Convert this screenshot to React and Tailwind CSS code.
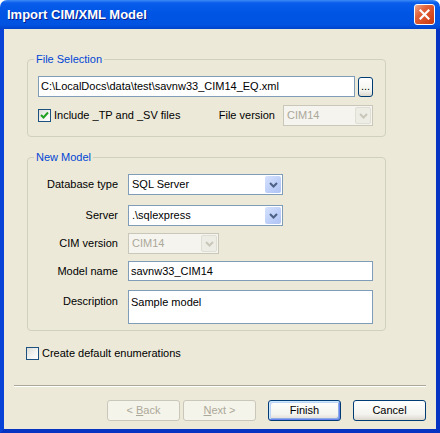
import React from 'react';

function ComboArrow({ disabled }) {
  return (
    <div
      className={
        disabled
          ? 'absolute right-[1px] top-[1px] bottom-[1px] w-[16px] flex items-center justify-center bg-[#EEEDE5] border border-[#E0DED3] rounded-[2px]'
          : 'absolute right-[1px] top-[1px] bottom-[1px] w-[16px] flex items-center justify-center bg-[linear-gradient(135deg,#D6E2FD_0%,#BCCEF8_60%,#AFC3F3_100%)] rounded-[2px]'
      }
    >
      <svg width="9" height="6" viewBox="0 0 9 6">
        <path d="M1 1 L4.5 4.5 L8 1" fill="none" stroke={disabled ? '#C9C7BA' : '#4D6185'} strokeWidth="2" />
      </svg>
    </div>
  );
}

function Combo({ value, width, disabled }) {
  return (
    <div
      className={
        disabled
          ? 'relative h-[21px] border border-[#C9C7BA] bg-[#F5F4EF] text-[#ACA899] pl-[3px] flex items-center'
          : 'relative h-[21px] border border-[#7F9DB9] bg-white pl-[3px] flex items-center'
      }
      style={{ width }}
    >
      {value}
      <ComboArrow disabled={disabled} />
    </div>
  );
}

function CheckBox({ checked }) {
  return (
    <div className="w-[13px] h-[13px] border border-[#1C5180] bg-[linear-gradient(135deg,#DCDCD7_0%,#F5F5F2_60%,#FFFFFF_100%)] flex items-center justify-center">
      {checked && (
        <svg width="9" height="9" viewBox="0 0 9 9">
          <path d="M1 4 L3.5 6.5 L8 1.5" fill="none" stroke="#21A121" strokeWidth="2" />
        </svg>
      )}
    </div>
  );
}

function Button({ children, disabled, isDefault }) {
  let cls = 'w-[73px] h-[21px] rounded-[3px] flex items-center justify-center border ';
  if (disabled) {
    cls += 'border-[#C9C7BA] bg-[#F5F4EA] text-[#ACA899]';
  } else if (isDefault) {
    cls += 'border-[#003C74] bg-[linear-gradient(#FFFFFF_0%,#F3F3EF_70%,#DCD8CD_100%)] shadow-[inset_1px_1px_0_#CEE7FF,inset_-1px_-1px_0_#6982EE,inset_2px_2px_0_#BCD4F6,inset_-2px_-2px_0_#89ADE4]';
  } else {
    cls += 'border-[#003C74] bg-[linear-gradient(#FFFFFF_0%,#F3F3EF_70%,#DCD8CD_100%)]';
  }
  return <div className={cls}>{children}</div>;
}

export default function App() {
  return (
    <div className="w-[440px] h-[433px] flex flex-col font-['Liberation_Sans',Arial,sans-serif] text-[11px] text-black">
      {/* title bar */}
      <div className="h-[29px] flex items-center pl-[7px] pr-[5px] rounded-t-[7px] bg-[linear-gradient(#3D8BF7_0%,#0A5DEB_10%,#0055E5_45%,#0053E1_85%,#0043CC_100%)]">
        <span className="flex-1 text-white font-bold text-[13px] pt-[1px] [text-shadow:1px_1px_0_#0A1E8C]">Import CIM/XML Model</span>
        <div className="w-[21px] h-[21px] rounded-[3px] border border-white bg-[linear-gradient(135deg,#F2A88E_0%,#E3623A_35%,#D4471D_75%,#C23A12_100%)] flex items-center justify-center">
          <svg width="11" height="11" viewBox="0 0 11 11">
            <path d="M1.5 1.5 L9.5 9.5 M9.5 1.5 L1.5 9.5" stroke="white" strokeWidth="2.2" strokeLinecap="square" />
          </svg>
        </div>
      </div>

      {/* body */}
      <div className="flex-1 bg-[#ECE9D8] border-l-4 border-r-4 border-b-4 border-l-[#0842D6] border-r-[#0733C2] border-b-[#0733C2] flex flex-col">
        <fieldset className="ml-[23px] mt-[24px] w-[359px] border border-[#D0D0BF] rounded-[4px] pl-[10px] pr-[12px] pt-[10px] pb-[10px]">
          <legend className="-ml-[4px] px-[2px] leading-[13px] text-[#0046D5]">File Selection</legend>
          <div className="flex items-start">
            <div className="w-[317px] h-[21px] border border-[#7F9DB9] bg-white pl-[2px] flex items-center">
              C:\LocalDocs\data\test\savnw33_CIM14_EQ.xml
            </div>
            <div className="ml-[3px] mt-[1px] w-[15px] h-[20px] rounded-[3px] border border-[#003C74] bg-[linear-gradient(#FFFFFF_0%,#F3F3EF_70%,#DCD8CD_100%)] flex items-end justify-center pb-[4px] leading-none">
              ...
            </div>
          </div>
          <div className="mt-[8px] flex items-center justify-between">
            <div className="flex items-center">
              <CheckBox checked />
              <span className="ml-[3px]">Include _TP and _SV files</span>
            </div>
            <div className="flex items-center">
              <span className="mr-[8px]">File version</span>
              <Combo value="CIM14" width={90} disabled />
            </div>
          </div>
        </fieldset>

        <fieldset className="ml-[23px] mt-[14px] w-[359px] border border-[#D0D0BF] rounded-[4px] pl-[10px] pr-[12px] pt-[10px] pb-[6px]">
          <legend className="-ml-[4px] px-[2px] leading-[13px] text-[#0046D5]">New Model</legend>
          <div className="flex items-center">
            <span className="w-[80px] text-right">Database type</span>
            <div className="ml-[10px]"><Combo value="SQL Server" width={155} /></div>
          </div>
          <div className="mt-[10px] flex items-center">
            <span className="w-[80px] text-right">Server</span>
            <div className="ml-[10px]"><Combo value=".\sqlexpress" width={155} /></div>
          </div>
          <div className="mt-[7px] flex items-center">
            <span className="w-[80px] text-right">CIM version</span>
            <div className="ml-[10px]"><Combo value="CIM14" width={91} disabled /></div>
          </div>
          <div className="mt-[7px] flex items-center">
            <span className="w-[80px] text-right">Model name</span>
            <div className="ml-[10px] w-[245px] h-[20px] border border-[#7F9DB9] bg-white pl-[2px] flex items-center">savnw33_CIM14</div>
          </div>
          <div className="mt-[9px] flex items-start">
            <span className="w-[80px] text-right pt-[3px]">Description</span>
            <div className="ml-[10px] w-[245px] h-[34px] border border-[#7F9DB9] bg-white pl-[2px] pt-[3px]">Sample model</div>
          </div>
        </fieldset>

        <div className="ml-[22px] mt-[14px] flex items-center">
          <CheckBox />
          <span className="ml-[3px]">Create default enumerations</span>
        </div>

        <div className="ml-[10px] mt-[23px] w-[412px] border-t border-t-[#ACA899] border-b border-b-white" />

        <div className="mt-[13px] flex pr-[10px] justify-end">
          <Button disabled>&lt; <span className="underline ml-[3px]">B</span>ack</Button>
          <div className="ml-[3px]">
            <Button disabled><span className="underline">N</span>ext &gt;</Button>
          </div>
          <div className="ml-[12px]">
            <Button isDefault>Finish</Button>
          </div>
          <div className="ml-[12px]">
            <Button>Cancel</Button>
          </div>
        </div>
      </div>
    </div>
  );
}
